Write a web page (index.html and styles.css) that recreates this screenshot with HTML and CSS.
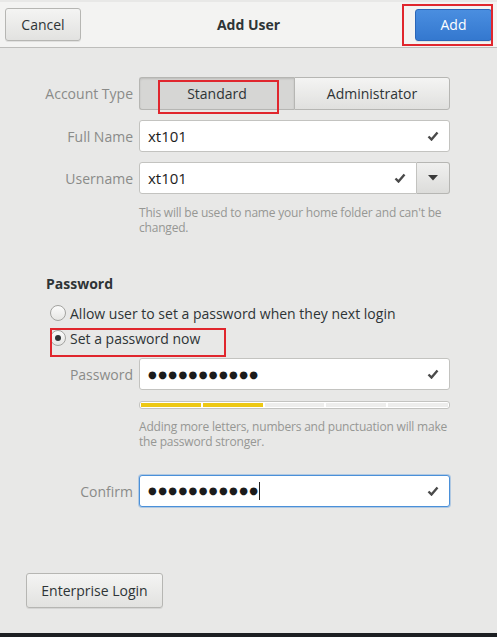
FILE: index.html
```html
<!DOCTYPE html>
<html>
  <head>
    <title>Add User</title>
    <meta charset="UTF-8" />
    <link rel="stylesheet" href="styles.css">
  </head>

  <body>
    <div class="window">
      <div class="header">
        <button class="btn cancel_btn">Cancel</button>
        <div class="header_title">Add User</div>
        <button class="btn add_btn">Add</button>
        <span class="mark mark_add"></span>
      </div>

      <div class="content">
        <div class="form_grid">
          <span class="label">Account Type</span>
          <div class="toggle">
            <button class="toggle_btn pressed">Standard</button>
            <button class="toggle_btn">Administrator</button>
          </div>

          <span class="label">Full Name</span>
          <div class="entry">
            <span class="entry_text">xt101</span>
            <svg class="check" width="12" height="10" viewBox="0 0 12 10"><path d="M1.5 5.5 L4.5 8.5 L10.5 1.5" fill="none" stroke="#4a4a4a" stroke-width="2.4"/></svg>
          </div>

          <span class="label">Username</span>
          <div class="combo">
            <div class="entry combo_entry">
              <span class="entry_text">xt101</span>
              <svg class="check" width="12" height="10" viewBox="0 0 12 10"><path d="M1.5 5.5 L4.5 8.5 L10.5 1.5" fill="none" stroke="#4a4a4a" stroke-width="2.4"/></svg>
            </div>
            <button class="combo_btn">
              <svg width="10" height="6" viewBox="0 0 10 6"><path d="M0 0 H10 L5 5.5 Z" fill="#3a3a3a"/></svg>
            </button>
          </div>

          <span></span>
          <p class="hint">This will be used to name your home folder and can't be changed.</p>
        </div>

        <div class="section_title">Password</div>
        <div class="radios">
          <div class="radio_row">
            <span class="radio"></span>
            <span>Allow user to set a password when they next login</span>
          </div>
          <div class="radio_row">
            <span class="radio checked"></span>
            <span>Set a password now</span>
          </div>
          <span class="mark mark_radio"></span>
        </div>

        <div class="form_grid pw_grid">
          <span class="label">Password</span>
          <div class="entry">
            <span class="entry_text dots">●●●●●●●●●●●</span>
            <svg class="check" width="12" height="10" viewBox="0 0 12 10"><path d="M1.5 5.5 L4.5 8.5 L10.5 1.5" fill="none" stroke="#4a4a4a" stroke-width="2.4"/></svg>
          </div>

          <span></span>
          <div class="strength">
            <span class="level filled"></span>
            <span class="level filled"></span>
            <span class="level"></span>
            <span class="level"></span>
            <span class="level"></span>
          </div>

          <span></span>
          <p class="hint">Adding more letters, numbers and punctuation will make the password stronger.</p>

          <span class="label confirm_label">Confirm</span>
          <div class="entry focused confirm_entry">
            <span class="entry_text dots">●●●●●●●●●●●<span class="caret"></span></span>
            <svg class="check" width="12" height="10" viewBox="0 0 12 10"><path d="M1.5 5.5 L4.5 8.5 L10.5 1.5" fill="none" stroke="#4a4a4a" stroke-width="2.4"/></svg>
          </div>
        </div>

        <div class="footer">
          <button class="btn enterprise_btn">Enterprise Login</button>
        </div>
      </div>

      <span class="mark mark_standard"></span>
    </div>
  </body>
</html>
```

FILE: styles.css
```css
body {
  margin: 0;
  background: #1c1f22;
  font-family: "Open Sans", "Noto Sans", sans-serif;
  font-size: 14px;
  color: #2e3436;
}

.window {
  position: relative;
  width: 497px;
  height: 633px;
  background: #e8e8e7;
  overflow: hidden;
}

.header {
  position: relative;
  height: 45px;
  margin-top: 2px;
  background: #f3f3f2;
  border-bottom: 1px solid #bdbdbb;
  display: grid;
  grid-template-columns: 1fr auto 1fr;
  align-items: center;
  padding: 0 5px;
}

.header_title {
  font-weight: 700;
  font-size: 14px;
  color: #2e3436;
}

.btn {
  font-family: inherit;
  font-size: 14px;
  color: #2e3436;
  border: 1px solid #b6b6b3;
  border-radius: 3px;
  background: linear-gradient(#f4f4f3, #e2e2e0);
  box-shadow: 0 1px 0 rgba(0, 0, 0, 0.08);
}

.cancel_btn {
  justify-self: start;
  width: 76px;
  height: 33px;
}

.add_btn {
  justify-self: end;
  width: 77px;
  height: 32px;
  color: #fff;
  border-color: #2a66b8;
  background: linear-gradient(#4a8ee0, #3478cf);
}

.content {
  padding-top: 29px;
}

.form_grid {
  display: grid;
  grid-template-columns: 133px 311px;
  column-gap: 6px;
  row-gap: 10px;
  align-items: center;
}

.label {
  text-align: right;
  color: #8a8b89;
}

.toggle {
  display: flex;
  height: 33px;
}

.toggle_btn {
  flex: 1;
  font-family: inherit;
  font-size: 14px;
  color: #2e3436;
  border: 1px solid #b6b6b3;
  background: linear-gradient(#f4f4f3, #e0e0de);
}

.toggle_btn:first-child {
  border-radius: 3px 0 0 3px;
  border-right: none;
}

.toggle_btn:last-child {
  border-radius: 0 3px 3px 0;
}

.toggle_btn.pressed {
  background: #d6d6d4;
  box-shadow: inset 0 1px 2px rgba(0, 0, 0, 0.12);
}

.entry {
  height: 32px;
  box-sizing: border-box;
  background: #fff;
  border: 1px solid #c3c3c0;
  border-radius: 3px;
  display: flex;
  align-items: center;
  justify-content: space-between;
  padding: 0 10px 0 8px;
}

.entry_text {
  color: #1b1b1b;
  font-size: 15px;
}

.combo {
  display: flex;
}

.combo_entry {
  flex: 1;
  border-radius: 3px 0 0 3px;
}

.combo_btn {
  width: 33px;
  height: 32px;
  border: 1px solid #b6b6b3;
  border-left: none;
  border-radius: 0 3px 3px 0;
  background: linear-gradient(#f0f0ef, #dcdcda);
  display: flex;
  align-items: center;
  justify-content: center;
}

.hint {
  margin: 1px 0 0;
  font-size: 12px;
  line-height: 15px;
  letter-spacing: -0.2px;
  color: #969794;
}

.section_title {
  margin: 39px 0 0 46px;
  font-weight: 700;
}

.radios {
  position: relative;
  margin: 10px 0 0 50px;
  display: flex;
  flex-direction: column;
  gap: 5px;
}

.radio_row {
  display: flex;
  align-items: center;
  gap: 4px;
  height: 20px;
}

.radio {
  width: 14px;
  height: 14px;
  border: 1px solid #a3a3a0;
  border-radius: 50%;
  background: linear-gradient(#fbfbfb, #e6e6e4);
  display: flex;
  align-items: center;
  justify-content: center;
}

.radio.checked::after {
  content: "";
  width: 6px;
  height: 6px;
  border-radius: 50%;
  background: #2e3436;
}

.pw_grid {
  margin-top: 10px;
  row-gap: 9px;
}

.dots {
  font-family: "DejaVu Sans", sans-serif;
  font-size: 10px;
  letter-spacing: 1.4px;
}

.caret {
  display: inline-block;
  width: 1px;
  height: 18px;
  margin-left: 0;
  background: #222;
  vertical-align: middle;
}

.strength {
  margin-top: 2px;
  display: flex;
  gap: 2px;
  height: 8px;
  box-sizing: border-box;
  padding: 1px;
  border: 1px solid #c3c3c0;
  border-radius: 3px;
  background: #fff;
}

.level {
  flex: 1;
  background: #ededec;
}

.level.filled {
  background: #edc814;
}

.confirm_label,
.confirm_entry {
  margin-top: 17px;
}

.focused {
  border-color: #4a90d9;
  box-shadow: 0 0 0 1px rgba(74, 144, 217, 0.35);
}

.footer {
  margin: 66px 0 0 26px;
}

.enterprise_btn {
  width: 137px;
  height: 35px;
}

.mark {
  position: absolute;
  border: 2px solid #e0262d;
  pointer-events: none;
}

.mark_add {
  left: 402px;
  top: 2px;
  width: 87px;
  height: 38px;
}

.mark_standard {
  left: 158px;
  top: 80px;
  width: 117px;
  height: 30px;
}

.mark_radio {
  left: 0;
  top: 25px;
  width: 172px;
  height: 25px;
}
```
